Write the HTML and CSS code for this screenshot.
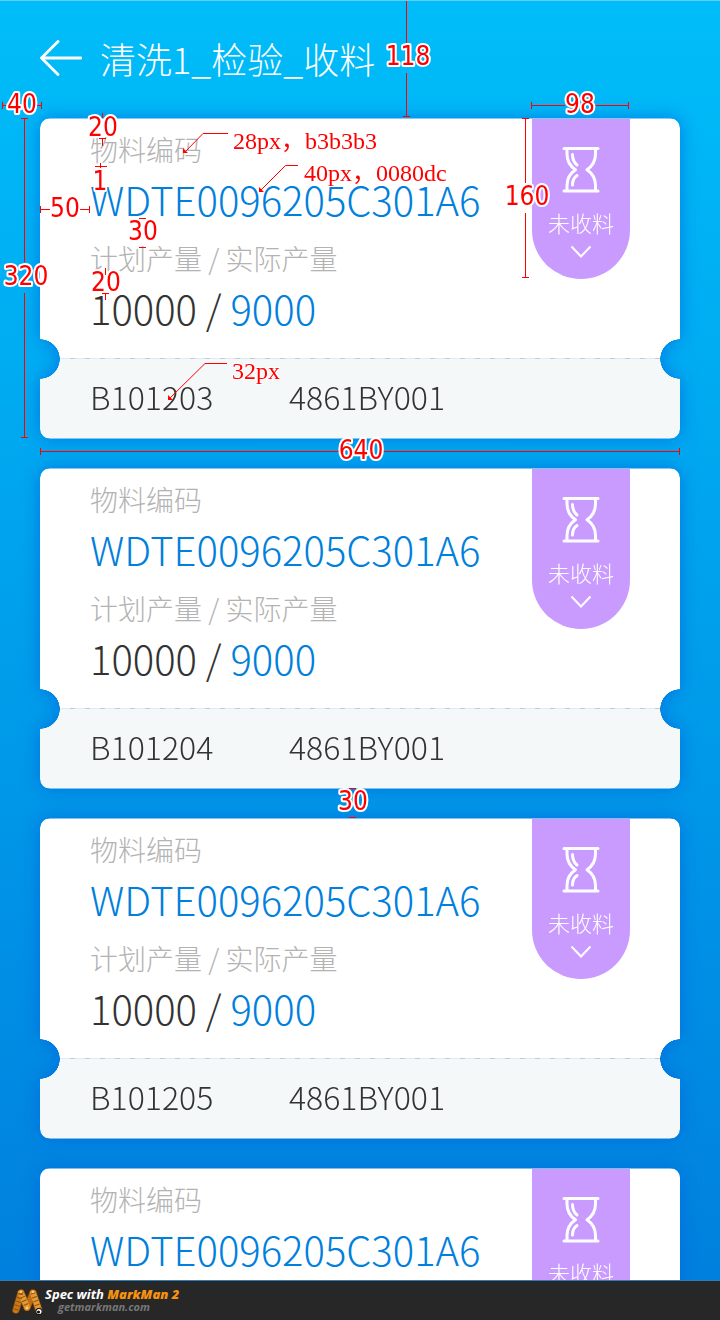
FILE: index.html
```html
<!DOCTYPE html>
<html lang="zh-CN">
<head>
<meta charset="utf-8">
<meta name="viewport" content="width=device-width, initial-scale=1">
<title>清洗1_检验_收料</title>
<link rel="stylesheet" href="styles.css">
</head>
<body>
<svg class="defs" width="0" height="0" aria-hidden="true">
  <symbol id="hourglass" viewBox="0 0 38 48">
    <g fill="none" stroke="#fff" stroke-width="3" stroke-linecap="round" stroke-linejoin="round">
      <path d="M2 2.500H36M2 45H36"/>
      <path d="M5 3V8C5 15 8 20 13.500 23.800C8 27.500 5 32.500 5 39.500V44"/>
      <path d="M33.500 3V8C33.500 15 30.500 20 25 23.800C30.500 27.500 33.500 32.500 33.500 39.500V44"/>
      <path d="M10.500 8.500C10.500 13 12 16.500 15 19M15 29.500C12 31.500 10.500 35 10.500 39"/>
    </g>
  </symbol>
  <symbol id="chevron" viewBox="0 0 22 14">
    <path d="M1.500 1.500L11 11.500L20.500 1.500" fill="none" stroke="#fff" stroke-width="2"/>
  </symbol>
</svg>

<div class="page">
  <header class="topbar">
    <button class="back" type="button" aria-label="返回">
      <svg width="42" height="36" viewBox="0 0 42 36" fill="none" stroke="#fff" stroke-width="2.800" stroke-linecap="round" stroke-linejoin="round"><path d="M18 1.500L1.500 18L18 34.500M1.500 18H41"/></svg>
    </button>
    <h1 class="title">清洗1_检验_收料</h1>
  </header>

  <main class="list">
    <div class="shade"><article class="card">
      <div class="main">
        <div class="info">
          <p class="label">物料编码</p>
          <p class="value code">WDTE0096205C301A6</p>
          <p class="label second">计划产量 / 实际产量</p>
          <p class="value">10000 / <span class="actual">9000</span></p>
        </div>
        <button class="badge" type="button"><svg class="glass"><use href="#hourglass"/></svg><span>未收料</span><svg class="chev"><use href="#chevron"/></svg></button>
      </div>
      <div class="stub"><span>B101203</span><span>4861BY001</span></div>
    </article></div>

    <div class="shade"><article class="card">
      <div class="main">
        <div class="info">
          <p class="label">物料编码</p>
          <p class="value code">WDTE0096205C301A6</p>
          <p class="label second">计划产量 / 实际产量</p>
          <p class="value">10000 / <span class="actual">9000</span></p>
        </div>
        <button class="badge" type="button"><svg class="glass"><use href="#hourglass"/></svg><span>未收料</span><svg class="chev"><use href="#chevron"/></svg></button>
      </div>
      <div class="stub"><span>B101204</span><span>4861BY001</span></div>
    </article></div>

    <div class="shade"><article class="card">
      <div class="main">
        <div class="info">
          <p class="label">物料编码</p>
          <p class="value code">WDTE0096205C301A6</p>
          <p class="label second">计划产量 / 实际产量</p>
          <p class="value">10000 / <span class="actual">9000</span></p>
        </div>
        <button class="badge" type="button"><svg class="glass"><use href="#hourglass"/></svg><span>未收料</span><svg class="chev"><use href="#chevron"/></svg></button>
      </div>
      <div class="stub"><span>B101205</span><span>4861BY001</span></div>
    </article></div>

    <div class="shade"><article class="card cut">
      <div class="main">
        <div class="info">
          <p class="label">物料编码</p>
          <p class="value code">WDTE0096205C301A6</p>
        </div>
        <button class="badge" type="button"><svg class="glass"><use href="#hourglass"/></svg><span>未收料</span></button>
      </div>
    </article></div>
  </main>

  <footer class="credit">
    <svg class="logo" width="34" height="30" viewBox="0 0 34 30">
      <g fill="none" stroke-linecap="round">
        <path d="M5 23L10 6M10 6L16 20M16 20L22 6M22 6L28 24" stroke="#8a4a08" stroke-width="7.500"/>
        <path d="M5 23L10 6" stroke="#c87916" stroke-width="6"/>
        <path d="M16 21L22 6" stroke="#bd6d12" stroke-width="6"/>
        <path d="M10 6L16 20M22 6L28 23" stroke="#e29a34" stroke-width="6"/>
        <path d="M10 6L16 20M22 6L28 23M5 23L10 6" stroke="#8f5210" stroke-width="5" stroke-linecap="butt" stroke-dasharray="1 3"/>
      </g>
      <circle cx="10" cy="5" r="1" fill="#ffe0a0"/><circle cx="22" cy="5" r="1" fill="#ffe0a0"/><circle cx="16" cy="21" r="1.200" fill="#ffd080"/>
      <circle cx="28" cy="24.500" r="3.600" fill="#111"/><circle cx="28" cy="24.500" r="2.600" fill="#fff"/><circle cx="27.500" cy="25" r="1.600" fill="#111"/>
    </svg>
    <div class="credit-text">
      <p class="spec">Spec with <b>MarkMan 2</b></p>
      <p class="site">getmarkman.com</p>
    </div>
  </footer>

  <svg class="marks" width="720" height="820" viewBox="0 0 720 820">
    <g class="rules">
      <path d="M406.500 0V43M406.500 73V116.500M403 116.500H410"/>
      <path d="M2.500 102V109M2.500 105.500H7M37 105.500H41.500M41.500 102V109"/>
      <path d="M531.500 102V109M531.500 105.500H565M595 105.500H628.500M628.500 102V109"/>
      <path d="M102.500 113V118M99 138.500H106M102.500 138V146"/>
      <path d="M95 166.500H107M100.500 163V170"/>
      <path d="M40.500 206V213M40.500 209.500H50M80 209.500H89.500M89.500 206V213"/>
      <path d="M139 218.500H146M139 247.500H146"/>
      <path d="M105.500 268V275M102 293.500H109M105.500 293V300"/>
      <path d="M21 118.500H28M24.500 118V262M24.500 293V437M21 437.500H28"/>
      <path d="M522 118.500H529M525.500 118V183M525.500 213V277M522 277.500H529"/>
      <path d="M40.500 448V455M40.500 451.500H339M383 451.500H679.500M679.500 448V455"/>
      <path d="M349 788.500H356M349 817.500H356"/>
      <path d="M185 152L203 133.500H228M260 191L285.500 165.500H298M169 399L205 363.500H227"/>
    </g>
    <path class="tips" d="M183 148V153H188ZM259 187V192H264ZM168 395V400H173Z"/>
    <g class="sizes">
      <text x="408" y="65">118</text><text x="22" y="113">40</text><text x="580" y="113">98</text>
      <text x="103" y="136">20</text><text x="100" y="190">1</text><text x="65" y="217">50</text>
      <text x="143" y="240">30</text><text x="106" y="291">20</text><text x="26" y="285">320</text>
      <text x="527" y="205">160</text><text x="361" y="459">640</text><text x="353" y="810">30</text>
    </g>
    <g class="notes">
      <text x="233" y="149">28px，b3b3b3</text><text x="304" y="181">40px，0080dc</text><text x="232" y="379">32px</text>
    </g>
  </svg>
</div>
</body>
</html>
```
FILE: styles.css
```css
* { box-sizing: border-box; }
body {
  margin: 0;
  font-family: "Noto Sans CJK SC Light", "Noto Sans CJK SC", sans-serif;
  font-weight: 300;
  color: #333;
}
p, h1 { margin: 0; font-weight: inherit; }
button { border: 0; padding: 0; background: none; font: inherit; color: inherit; }
.defs { position: absolute; }

.page {
  position: relative;
  display: flex;
  flex-direction: column;
  height: 100vh;
  overflow: hidden;
  background: linear-gradient(#00bdf9, #007edd);
  border-top: 1px solid #5fcff8;
}
.topbar {
  display: flex;
  align-items: center;
  gap: 18px;
  padding: 29px 40px 32px;
}
.back svg { display: block; }
.title { font-size: 36px; line-height: 56px; color: #fff; white-space: nowrap; }

.list {
  flex: 1;
  min-height: 0;
  overflow: hidden;
  display: flex;
  flex-direction: column;
  gap: 29px;
  padding: 118px 40px 0;
  margin-top: -118px;
}
.shade { flex: none; filter: drop-shadow(0 0 9px rgba(0, 100, 220, .7)); }
.card {
  padding: 1px 0;
  border-radius: 10px;
  overflow: hidden;
  background: rgba(255, 255, 255, .5);
  mask:
    radial-gradient(circle at 0 calc(100% - 80px), transparent 19.500px, #000 20px),
    radial-gradient(circle at 100% calc(100% - 80px), transparent 19.500px, #000 20px);
  mask-composite: intersect;
}
.card.cut { mask: none; }
.main {
  display: flex;
  align-items: flex-start;
  justify-content: space-between;
  padding: 0 50px;
  background: #fff;
}
.info { padding: 15px 0 25px; white-space: nowrap; }
.label { font-size: 28px; line-height: 30px; color: #b3b3b3; }
.second { margin-top: 19px; }
.value { margin-top: 10px; font-size: 40px; line-height: 50px; }
.code, .actual { color: #0080dc; }

.badge {
  display: flex;
  flex-direction: column;
  align-items: center;
  width: 98px;
  height: 160px;
  padding-top: 27px;
  border-radius: 0 0 49px 49px;
  background: #c99bff;
  color: #fff;
  font-size: 22px;
  line-height: 30px;
}
.badge span { margin-top: 13px; }
.glass { width: 38px; height: 48px; }
.chev { width: 22px; height: 14px; margin-top: 8px; }

.stub {
  display: grid;
  grid-template-columns: 199px 1fr;
  padding: 18px 50px 22px;
  font-size: 32px;
  line-height: 40px;
  background:
    repeating-linear-gradient(90deg, #c9c9cd 0 5px, #d9ecf9 5px 15px) 0 0 / 100% 1px no-repeat,
    #f4f8f9;
}

.credit {
  display: flex;
  height: 40px;
  padding: 6px 11px 0;
  background: #272727;
  border-top: 1px solid #2c7db5;
  font-family: "Open Sans", "Noto Sans", sans-serif;
  font-style: italic;
  font-weight: 700;
}
.spec { font-size: 13px; line-height: 14px; color: #fff; }
.spec b { color: #f7930f; }
.site { padding-left: 13px; font-size: 11px; line-height: 12px; color: #777; }

.marks { position: absolute; top: -1px; left: 0; pointer-events: none; }
.rules { fill: none; stroke: #f00; stroke-width: 1; }
.tips { fill: #f00; }
.sizes, .notes { fill: #f00; stroke: #fff; paint-order: stroke; stroke-linejoin: round; font-weight: 400; }
.sizes { font-family: "DejaVu Sans Condensed", "DejaVu Sans", sans-serif; font-stretch: condensed; font-size: 26px; stroke-width: 4px; text-anchor: middle; }
.notes { font-family: "Liberation Serif", "Noto Sans CJK SC", serif; font-size: 24px; stroke-width: 2px; }
```
